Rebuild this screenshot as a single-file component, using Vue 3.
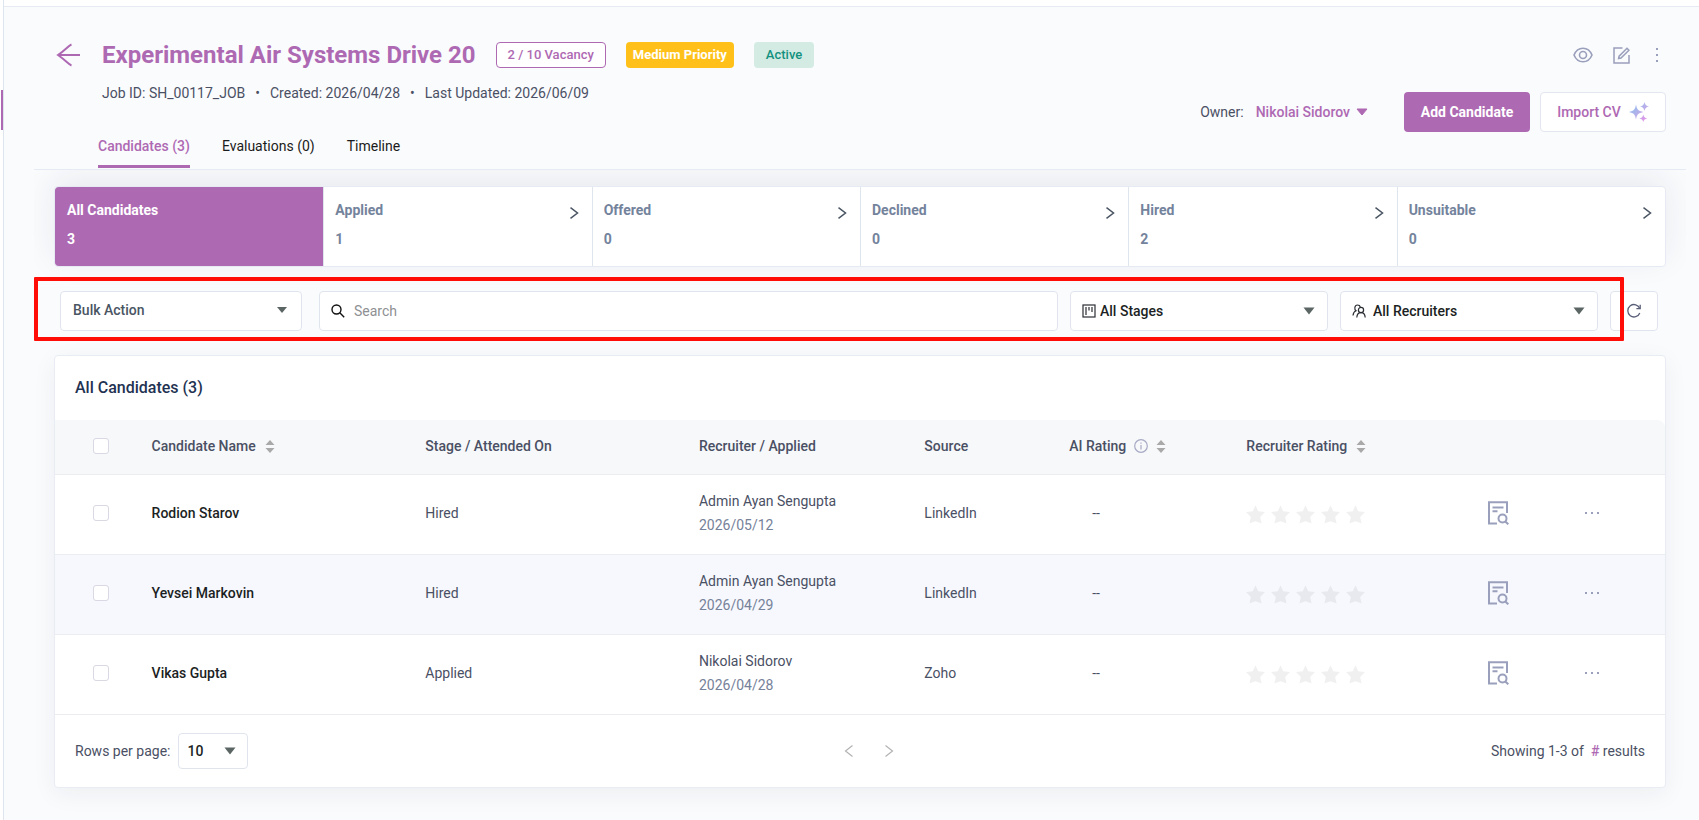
<script setup>
import { ref, computed } from 'vue'

const tabs = ['Candidates (3)', 'Evaluations (0)', 'Timeline']
const activeTab = ref(0)

const stages = [
  { name: 'All Candidates', count: 3 },
  { name: 'Applied', count: 1 },
  { name: 'Offered', count: 0 },
  { name: 'Declined', count: 0 },
  { name: 'Hired', count: 2 },
  { name: 'Unsuitable', count: 0 },
]
const activeStage = ref(0)

const candidates = [
  { id: 1, name: 'Rodion Starov', stage: 'Hired', recruiter: 'Admin Ayan Sengupta', applied: '2026/05/12', source: 'LinkedIn' },
  { id: 2, name: 'Yevsei Markovin', stage: 'Hired', recruiter: 'Admin Ayan Sengupta', applied: '2026/04/29', source: 'LinkedIn' },
  { id: 3, name: 'Vikas Gupta', stage: 'Applied', recruiter: 'Nikolai Sidorov', applied: '2026/04/28', source: 'Zoho' },
]

const search = ref('')
const selected = ref([])

// select all rows
const allSelected = computed({
  get: () => selected.value.length === candidates.length,
  set: (val) => {
    selected.value = val ? candidates.map((c) => c.id) : []
  },
})
</script>

<template>
  <div class="app">
    <aside class="rail"><span class="rail-active"></span></aside>

    <main class="main">
      <div class="topbar"></div>

      <header class="job-header">
        <div class="job-info">
          <div class="title-row">
            <button class="icon-btn back" aria-label="Back">
              <svg width="24" height="24" viewBox="0 0 24 24" fill="none" stroke="currentColor" stroke-width="2">
                <path d="M24 12H2M15.5 1.5C12.5 2.5 10.500 6 2 12C10.500 18 12.500 21.500 15.500 22.500" />
              </svg>
            </button>
            <h1>Experimental Air Systems Drive 20</h1>
            <span class="badge vacancy">2 / 10 Vacancy</span>
            <span class="badge priority">Medium Priority</span>
            <span class="badge status">Active</span>
          </div>
          <p class="meta">
            <span>Job ID: SH_00117_JOB</span>
            <span>•</span>
            <span>Created: 2026/04/28</span>
            <span>•</span>
            <span>Last Updated: 2026/06/09</span>
          </p>
          <nav class="tabs">
            <button
              v-for="(tab, i) in tabs"
              :key="tab"
              class="tab"
              :class="{ active: activeTab === i }"
              @click="activeTab = i"
            >
              {{ tab }}
            </button>
          </nav>
        </div>

        <div class="job-actions">
          <div class="tools">
            <button class="icon-btn" aria-label="View">
              <svg width="20" height="16" viewBox="0 0 20 16" fill="none" stroke="currentColor" stroke-width="1.6">
                <path d="M1 8C3 3.2 6.2 1.200 10 1.200S17 3.200 19 8C17 12.800 13.800 14.800 10 14.800S3 12.800 1 8Z" />
                <circle cx="10" cy="8" r="3.500" />
              </svg>
            </button>
            <button class="icon-btn" aria-label="Edit">
              <svg width="17" height="17" viewBox="0 0 17 17" fill="none" stroke="currentColor" stroke-width="1.5">
                <path d="M9.500 1H1V16H16V8" />
                <path d="M14 1.300L15.900 3.200L8 11.100L5.600 11.600L6.100 9.200Z" />
              </svg>
            </button>
            <button class="icon-btn" aria-label="More">
              <svg width="16" height="16" viewBox="0 0 16 16" fill="currentColor">
                <path d="M6 1h2v2H6zM6 7h2v2H6zM6 13h2v2H6z" />
              </svg>
            </button>
          </div>
          <div class="buttons">
            <span class="owner-label">Owner:</span>
            <button class="owner">
              Nikolai Sidorov
              <svg width="12" height="8" viewBox="0 0 12 8"><path d="M1 1H11L6 7Z" fill="currentColor" stroke="currentColor" stroke-linejoin="round" /></svg>
            </button>
            <button class="btn primary">Add Candidate</button>
            <button class="btn outline">
              Import CV
              <svg width="20" height="20" viewBox="0 0 20 20">
                <defs>
                  <linearGradient id="spark" x1="0" y1="0" x2="1" y2="1">
                    <stop offset="0" stop-color="#7cc4ee" />
                    <stop offset="0.5" stop-color="#b6b0ea" />
                    <stop offset="1" stop-color="#f08ae8" />
                  </linearGradient>
                </defs>
                <path
                  fill="url(#spark)"
                  d="M7 2.500C8 7.500 9 9 14.500 10C9 11 8 12.500 7 17.500C6 12.500 5 11 0 10C5 9 6 7.500 7 2.500ZM15.500 0C16.200 3 17 3.800 20 4.500C17 5.200 16.200 6 15.500 9C14.800 6 14 5.200 11 4.500C14 3.800 14.800 3 15.500 0ZM14.300 12.500C15 15.300 15.700 16 18.300 16.500C15.700 17 15 17.700 14.300 20C13.600 17.700 12.900 17 10.300 16.500C12.900 16 13.600 15.300 14.300 12.500Z"
                />
              </svg>
            </button>
          </div>
        </div>
      </header>

      <section class="body">
        <div class="stages">
          <button
            v-for="(stage, i) in stages"
            :key="stage.name"
            class="stage"
            :class="{ active: activeStage === i }"
            @click="activeStage = i"
          >
            <span class="stage-text">
              <span>{{ stage.name }}</span>
              <span>{{ stage.count }}</span>
            </span>
            <svg v-if="i > 0" width="10" height="12" viewBox="0 0 10 12" fill="none" stroke="currentColor" stroke-width="1.5">
              <path d="M1.500 0.700L8.500 6L1.500 11.300" />
            </svg>
          </button>
        </div>

        <div class="filters">
          <label class="field bulk">
            <select aria-label="Bulk Action">
              <option>Bulk Action</option>
            </select>
            <svg width="10" height="6" viewBox="0 0 10 6"><path d="M0 0H10L5 6Z" fill="currentColor" /></svg>
          </label>
          <label class="field search">
            <svg width="14" height="14" viewBox="0 0 14 14" fill="none" stroke="#111" stroke-width="1.4">
              <circle cx="5.500" cy="5.500" r="4.500" />
              <path d="M8.800 8.800L13.200 13.200" />
            </svg>
            <input v-model="search" type="text" placeholder="Search" aria-label="Search" />
          </label>
          <label class="field">
            <svg width="14" height="14" viewBox="0 0 14 14" fill="none" stroke="#2a2e33" stroke-width="1.200">
              <rect x="1" y="1" width="12" height="12" />
              <path d="M4 3V11M7 3V6.500M10 3V8" />
            </svg>
            <select aria-label="Stages">
              <option>All Stages</option>
            </select>
            <svg width="12" height="8" viewBox="0 0 12 8"><path d="M0.500 0.500H11.500L6 7.500Z" fill="currentColor" /></svg>
          </label>
          <label class="field recruiters">
            <svg width="14" height="14" viewBox="0 0 14 14" fill="none" stroke="#2a2e33" stroke-width="1.200">
              <path d="M1 11.500C1.200 9 2.300 7.500 4 6.800C2.200 5.500 2.300 1 5.500 1C7 1 8 1.800 8.300 3" />
              <circle cx="9" cy="6" r="2.600" />
              <path d="M4.800 13.500C5 10.500 6.800 8.700 9 8.700S13 10.500 13.200 13.500" />
            </svg>
            <select aria-label="Recruiters">
              <option>All Recruiters</option>
            </select>
            <svg width="12" height="8" viewBox="0 0 12 8"><path d="M0.500 0.500H11.500L6 7.500Z" fill="currentColor" /></svg>
          </label>
          <button class="field refresh" aria-label="Refresh">
            <svg width="16" height="16" viewBox="0 0 16 16" fill="none" stroke="currentColor" stroke-width="1.300">
              <path d="M13.800 10A6.200 6.200 0 1 1 13.800 5.500" />
              <path d="M14.200 1.800V5.600H10.400" />
            </svg>
          </button>
          <span class="highlight"></span>
        </div>

        <div class="card">
          <h2>All Candidates (3)</h2>
          <table>
            <colgroup>
              <col class="w6" /><col class="w17" /><col class="w17" /><col class="w14" /><col class="w9" />
              <col class="w11" /><col class="w15" /><col class="w6" /><col />
            </colgroup>
            <thead>
              <tr>
                <th class="check"><input v-model="allSelected" type="checkbox" aria-label="Select all" /></th>
                <th>
                  <span class="th">Candidate Name
                    <svg class="sort" width="10" height="13" viewBox="0 0 10 13"><path d="M5 0L9.500 5H0.500ZM5 13L9.500 8H0.500Z" /></svg>
                  </span>
                </th>
                <th>Stage / Attended On</th>
                <th>Recruiter / Applied</th>
                <th>Source</th>
                <th>
                  <span class="th ai">AI Rating
                    <svg class="info" width="14" height="14" viewBox="0 0 14 14" fill="none" stroke="currentColor" stroke-width="1.200">
                      <circle cx="7" cy="7" r="6.300" />
                      <path d="M7 6V10.500M7 3.500V4.800" />
                    </svg>
                    <svg class="sort" width="10" height="13" viewBox="0 0 10 13"><path d="M5 0L9.500 5H0.500ZM5 13L9.500 8H0.500Z" /></svg>
                  </span>
                </th>
                <th>
                  <span class="th">Recruiter Rating
                    <svg class="sort" width="10" height="13" viewBox="0 0 10 13"><path d="M5 0L9.500 5H0.500ZM5 13L9.500 8H0.500Z" /></svg>
                  </span>
                </th>
                <th></th>
                <th></th>
              </tr>
            </thead>
            <tbody>
              <tr v-for="c in candidates" :key="c.id">
                <td class="check"><input v-model="selected" type="checkbox" :value="c.id" :aria-label="c.name" /></td>
                <td class="name">{{ c.name }}</td>
                <td>{{ c.stage }}</td>
                <td>
                  <div>{{ c.recruiter }}</div>
                  <div class="date">{{ c.applied }}</div>
                </td>
                <td>{{ c.source }}</td>
                <td class="rating">--</td>
                <td class="stars-cell">
                  <div class="stars">
                    <svg v-for="n in 5" :key="n" width="19" height="19" viewBox="0 0 19 19">
                      <path d="M9.500 0.300L12.300 6.300L19 7.100L14.200 11.900L15.600 18.500L9.500 16.300L3.400 18.500L4.800 11.900L0 7.100L6.700 6.300Z" />
                    </svg>
                  </div>
                </td>
                <td>
                  <button class="icon-btn" aria-label="Preview CV">
                    <svg width="21" height="24" viewBox="0 0 21 24" fill="none" stroke="currentColor" stroke-width="2">
                      <path d="M9 22.500H1V1.200H19V12" />
                      <path d="M4.500 6.500H15.500M4.500 10.200H9.500" />
                      <circle cx="14.500" cy="17.500" r="4" />
                      <path d="M17.300 20.500L20.300 23.300" />
                    </svg>
                  </button>
                </td>
                <td>
                  <button class="icon-btn" aria-label="Row actions">
                    <svg width="16" height="4" viewBox="0 0 16 4" fill="currentColor">
                      <path d="M1 1h2v2H1zM7 1h2v2H7zM13 1h2v2H13z" />
                    </svg>
                  </button>
                </td>
              </tr>
            </tbody>
          </table>

          <footer class="pager">
            <label class="rows">
              Rows per page:
              <span class="rows-select">
                <select>
                  <option>10</option>
                </select>
                <svg width="12" height="8" viewBox="0 0 12 8"><path d="M0.500 0.500H11.500L6 7.500Z" fill="currentColor" /></svg>
              </span>
            </label>
            <div class="arrows">
              <button class="icon-btn" aria-label="Previous page">
                <svg width="10" height="12" viewBox="0 0 10 12" fill="none" stroke="currentColor" stroke-width="1.200"><path d="M8.500 0.500L1.500 6L8.500 11.500" /></svg>
              </button>
              <button class="icon-btn" aria-label="Next page">
                <svg width="10" height="12" viewBox="0 0 10 12" fill="none" stroke="currentColor" stroke-width="1.200"><path d="M1.500 0.500L8.500 6L1.500 11.500" /></svg>
              </button>
            </div>
            <p class="total">Showing 1-3 of &nbsp;<a href="#">#</a> results</p>
          </footer>
        </div>
      </section>
    </main>
  </div>
</template>

<style>
body {
  background: #fafbfd;
}
</style>

<style scoped>
.app {
  display: flex;
  min-height: 100vh;
  background: #fafbfd;
  font-family: Roboto, 'Liberation Sans', sans-serif;
  font-size: 14px;
  line-height: 20px;
  color: #4a5064;
}

.app * {
  box-sizing: border-box;
}

h1,
h2,
p {
  margin: 0;
}

button,
input,
select {
  font: inherit;
  color: inherit;
}

button {
  padding: 0;
  border: none;
  background: none;
  cursor: pointer;
}

svg {
  display: block;
  flex: none;
}

/* left rail */
.rail {
  flex: none;
  width: 4px;
  padding: 90px 0 0 1px;
  background: #fff;
  border-right: 1px solid #dfe5ee;
}

.rail-active {
  display: block;
  height: 40px;
  background: #ae69b3;
}

.main {
  flex: 1;
  min-width: 0;
}

.topbar {
  height: 7px;
  background: #fff;
  border-bottom: 1px solid #e6ebf3;
}

/* job header */
.job-header {
  display: flex;
  justify-content: space-between;
  margin: 0 13px 0 30px;
  padding: 34px 20px 1px 22px;
  border-bottom: 1px solid #e6eaf2;
}

.title-row {
  display: flex;
  align-items: center;
  height: 28px;
}

.icon-btn {
  display: block;
  color: #9a9fbc;
}

.back {
  margin-right: 22px;
  color: #ae69b3;
}

h1 {
  font-size: 24px;
  line-height: 28px;
  font-weight: 700;
  color: #ae69b3;
}

.badge {
  height: 26px;
  margin-left: 20px;
  border-radius: 4px;
  font-size: 13px;
  line-height: 26px;
  font-weight: 500;
}

.vacancy {
  padding: 0 11px;
  border: 1px solid #ae69b3;
  background: #fff;
  line-height: 24px;
  color: #ae69b3;
}

.priority {
  padding: 0 7px;
  background: #ffc119;
  font-weight: 700;
  color: #fff;
}

.status {
  padding: 0 12px;
  background: #d3ebe2;
  color: #14917f;
}

.meta {
  display: flex;
  gap: 10px;
  margin: 14px 0 0 46px;
}

.tabs {
  display: flex;
  gap: 32px;
  margin: 33px 0 0 42px;
}

.tab {
  padding-bottom: 9px;
  border-bottom: 3px solid transparent;
  color: #1a1c20;
}

.tab.active {
  border-color: #ae69b3;
  font-weight: 500;
  color: #ae69b3;
}

.tools {
  display: flex;
  justify-content: flex-end;
  align-items: center;
  gap: 20px;
  height: 28px;
}

.buttons {
  display: flex;
  align-items: center;
  margin-top: 23px;
}

.owner-label {
  margin-right: 12px;
}

.owner {
  display: flex;
  align-items: center;
  gap: 6px;
  margin-right: 36px;
  font-weight: 500;
  color: #ae69b3;
}

.btn {
  display: flex;
  align-items: center;
  justify-content: center;
  gap: 8px;
  width: 126px;
  height: 40px;
  border-radius: 4px;
  font-weight: 500;
}

.primary {
  margin-right: 10px;
  background: #ae69b3;
  font-weight: 700;
  color: #fff;
}

.outline {
  border: 1px solid #e2e6ee;
  background: #fff;
  color: #ae69b3;
}

/* body under the header */
.body {
  margin: 0 13px 0 30px;
  padding: 16px 20px 32px;
  overflow: hidden;
}

.stages {
  display: flex;
  border: 1px solid #e6eaf3;
  border-radius: 4px;
  background: #fff;
  box-shadow: 0 -8px 32px rgba(30, 41, 59, 0.08);
}

.stage {
  display: flex;
  flex: 1;
  justify-content: space-between;
  align-items: flex-start;
  padding: 13px 13px 17px 11px;
  border-left: 1px solid #dfe5ed;
  text-align: left;
  font-weight: 700;
  color: #74839c;
}

.stage:first-child {
  border-left-color: transparent;
}

.stage.active {
  border-radius: 4px 0 0 4px;
  border-left-color: #ae69b3;
  background: #ae69b3;
  color: #fff;
}

.stage-text {
  display: flex;
  flex-direction: column;
  gap: 9px;
}

.stage svg {
  margin-top: 7px;
  color: #4a5563;
}

/* filters */
.filters {
  position: relative;
  display: grid;
  grid-template-columns: 242px 1fr 258px 258px 48px;
  gap: 12px;
  padding: 24px 8px 24px 6px;
}

.field {
  display: flex;
  align-items: center;
  gap: 4px;
  min-width: 0;
  height: 40px;
  padding: 0 12px 1px 11px;
  border: 1px solid #e0e5ed;
  border-radius: 4px;
  background: #fff;
  font-weight: 500;
  color: #1c1f24;
}

.field select,
.rows-select select {
  flex: 1;
  min-width: 0;
  padding: 0;
  border: none;
  outline: none;
  background: none;
  appearance: none;
}

.field select + svg,
.rows-select svg {
  color: #5b6564;
}

.field.bulk {
  padding: 0 14px 2px 12px;
  color: #4a5563;
}

.field.search {
  gap: 9px;
  margin-left: 5px;
  font-weight: 400;
}

.field.recruiters {
  gap: 7px;
}

.search input {
  flex: 1;
  min-width: 0;
  padding: 0;
  border: none;
  outline: none;
  background: none;
}

.search input::placeholder {
  color: #8e9093;
}

.refresh {
  justify-content: center;
  padding: 0;
  color: #5a5f78;
}

/* frame around the filter group */
.highlight {
  position: absolute;
  top: 10px;
  bottom: 14px;
  left: -20px;
  right: 42px;
  border: 4px solid #ff0d06;
  border-radius: 1px;
  pointer-events: none;
}

/* candidates */
.card {
  border: 1px solid #e8ecf3;
  border-radius: 4px;
  background: #fff;
  box-shadow: 0 6px 24px rgba(30, 41, 59, 0.06);
}

h2 {
  padding: 22px 20px;
  font-size: 16px;
  line-height: 20px;
  font-weight: 500;
  color: #1f3252;
}

table {
  width: 100%;
  table-layout: fixed;
  border-collapse: separate;
  border-spacing: 0;
}

.w6 { width: 6%; }
.w9 { width: 9%; }
.w11 { width: 11%; }
.w14 { width: 14%; }
.w15 { width: 15%; }
.w17 { width: 17%; }

th,
td {
  padding: 0 0 2px;
  border-bottom: 1px solid #ebedf0;
  text-align: left;
  vertical-align: middle;
}

th {
  height: 55px;
  background: #f7f8fa;
  font-weight: 500;
}

th:last-child {
  border-top-right-radius: 8px;
}

td {
  height: 80px;
  padding-bottom: 4px;
  line-height: 24px;
}

tbody tr:nth-child(even) {
  background: #f6f8fd;
}

.check {
  padding-left: 38px;
}

input[type='checkbox'] {
  display: block;
  width: 16px;
  height: 16px;
  margin: 0;
  border: 1px solid #d9d8e3;
  border-radius: 3px;
  background: #fff;
  appearance: none;
}

input[type='checkbox']:checked {
  background: #ae69b3;
}

.th {
  display: flex;
  align-items: center;
  gap: 9px;
}

.ai {
  gap: 8px;
}

.sort {
  fill: #a9a9a9;
}

.info {
  color: #a7a9c4;
}

.name {
  font-weight: 500;
  color: #1c1f24;
}

.date {
  color: #76829a;
}

.rating {
  padding-left: 23px;
}

.stars-cell {
  padding-bottom: 0;
}

.stars {
  display: flex;
  gap: 6px;
}

.stars svg {
  fill: rgba(0, 0, 0, 0.06);
}

/* footer */
.pager {
  display: grid;
  grid-template-columns: 1fr auto 1fr;
  align-items: center;
  padding: 18px 20px;
}

.rows {
  display: flex;
  align-items: center;
  gap: 8px;
}

.rows-select {
  display: flex;
  align-items: center;
  width: 70px;
  height: 36px;
  padding: 0 11px 0 8px;
  border: 1px solid #e0e5ed;
  border-radius: 4px;
  font-weight: 500;
  color: #1c1f24;
}

.arrows {
  display: flex;
  gap: 30px;
  padding-left: 18px;
}

.arrows .icon-btn {
  color: #b3b3b3;
}

.total {
  text-align: right;
}

.total a {
  color: #ae69b3;
  font-weight: 500;
  text-decoration: none;
}
</style>
